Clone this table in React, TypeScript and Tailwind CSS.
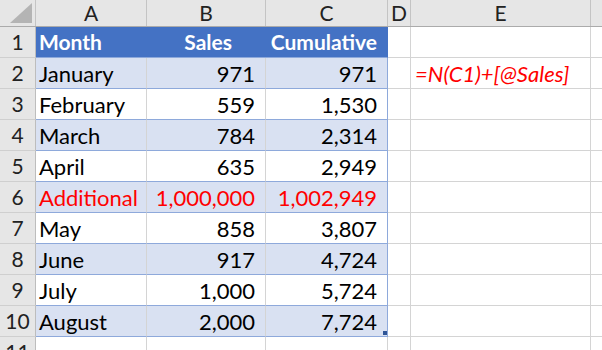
import React from "react";

type Row = {
  month: string;
  sales: string;
  cum: string;
  red?: boolean;
};

const rows: Row[] = [
  { month: "January", sales: "971", cum: "971" },
  { month: "February", sales: "559", cum: "1,530" },
  { month: "March", sales: "784", cum: "2,314" },
  { month: "April", sales: "635", cum: "2,949" },
  { month: "Additional", sales: "1,000,000", cum: "1,002,949", red: true },
  { month: "May", sales: "858", cum: "3,807" },
  { month: "June", sales: "917", cum: "4,724" },
  { month: "July", sales: "1,000", cum: "5,724" },
  { month: "August", sales: "2,000", cum: "7,724" },
];

const cols = ["A", "B", "C", "D", "E"];
const widths = ["w-[111px]", "w-[119px]", "w-[122px]", "w-[23px]", "w-[180px]"];

function RowNum({ n }: { n: number }) {
  return (
    <div className="w-[36px] h-[31px] shrink-0 bg-[#e6e6e6] border-r border-r-[#bdbdbd] border-b border-b-[#cfcfcf] flex items-center justify-center text-[21px] text-[#222]">
      {n}
    </div>
  );
}

export default function App() {
  return (
    <div
      className="w-[602px] h-[350px] overflow-hidden bg-white text-black"
      style={{ fontFamily: "Lato, 'Open Sans', sans-serif" }}
    >
      {/* column headers */}
      <div className="flex h-[27px] bg-[#e6e6e6] border-b border-[#ababab]">
        <div className="w-[36px] shrink-0 border-r border-[#c4c4c4] relative">
          <svg width="36" height="26" className="absolute left-0 top-0">
            <polygon points="10,23 32,23 32,3" fill="#b4b4b4" />
          </svg>
        </div>
        {cols.map((c, i) => (
          <div
            key={c}
            className={`${widths[i]} shrink-0 border-r border-[#c4c4c4] flex items-center justify-center text-[21px] text-[#222]`}
          >
            {c}
          </div>
        ))}
        <div className="flex-1" />
      </div>

      {/* row 1: table header */}
      <div className="flex h-[31px]">
        <RowNum n={1} />
        <div className="w-[111px] shrink-0 bg-[#4472c4] text-white font-bold text-[21px] flex items-center pl-[3px] border-b border-[#8ea9db]">
          Month
        </div>
        <div className="w-[119px] shrink-0 bg-[#4472c4] text-white font-bold text-[21px] flex items-center justify-end pr-[34px] border-b border-[#8ea9db]">
          Sales
        </div>
        <div className="w-[122px] shrink-0 bg-[#4472c4] text-white font-bold text-[21px] flex items-center justify-end pr-[10px] border-r border-[#4472c4] border-b border-b-[#8ea9db]">
          Cumulative
        </div>
        <div className="w-[23px] shrink-0 border-r border-b border-[#d4d4d4]" />
        <div className="w-[180px] shrink-0 border-r border-b border-[#d4d4d4]" />
        <div className="flex-1 border-b border-[#d4d4d4]" />
      </div>

      {rows.map((r, i) => {
        const banded = i % 2 === 0;
        const bg = banded ? "bg-[#d9e1f2]" : "bg-white";
        const txt = r.red ? "text-[#ff0000]" : "text-black";
        const last = i === rows.length - 1;
        return (
          <div key={r.month} className="flex h-[31px]">
            <RowNum n={i + 2} />
            <div
              className={`w-[111px] shrink-0 ${bg} ${txt} text-[22px] flex items-center pl-[3px] border-r border-r-[#d4d4d4] border-b border-b-[#8ea9db]`}
            >
              {r.month}
            </div>
            <div
              className={`w-[119px] shrink-0 ${bg} ${txt} text-[22px] flex items-center justify-end pr-[10px] border-r border-r-[#d4d4d4] border-b border-b-[#8ea9db]`}
            >
              {r.sales}
            </div>
            <div
              className={`relative w-[122px] shrink-0 ${bg} ${txt} text-[22px] flex items-center justify-end pr-[10px] border-r border-r-[#8ea9db] border-b border-b-[#8ea9db]`}
            >
              {r.cum}
              {last && (
                <div className="absolute right-0 bottom-[1px] w-[4px] h-[4px] bg-[#2f5597]" />
              )}
            </div>
            <div className="w-[23px] shrink-0 border-r border-b border-[#d4d4d4]" />
            <div className="w-[180px] shrink-0 border-r border-b border-[#d4d4d4] flex items-center pl-[4px] text-[22px] italic text-[#ff0000]">
              {i === 0 ? "=N(C1)+[@Sales]" : ""}
            </div>
            <div className="flex-1 border-b border-[#d4d4d4]" />
          </div>
        );
      })}

      {/* row 11 */}
      <div className="flex h-[31px]">
        <RowNum n={11} />
        {widths.map((w, i) => (
          <div key={i} className={`${w} shrink-0 border-r border-b border-[#d4d4d4]`} />
        ))}
        <div className="flex-1 border-b border-[#d4d4d4]" />
      </div>
    </div>
  );
}
